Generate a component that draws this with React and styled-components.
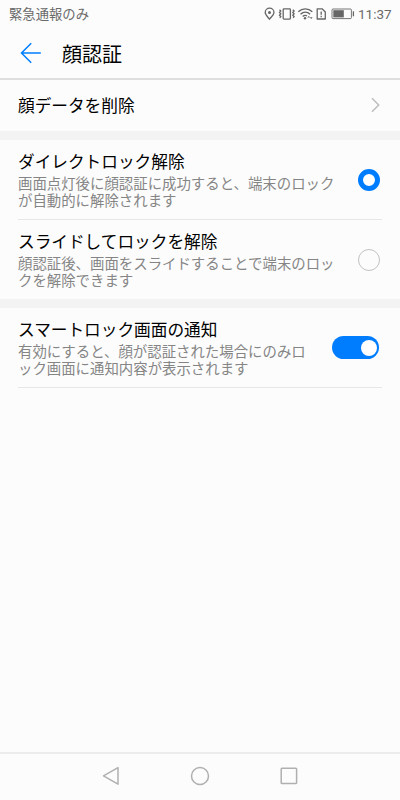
import React from 'react';
import { useState } from "react";
import styled, { createGlobalStyle } from "styled-components";


const GlobalStyle = createGlobalStyle`
    body {
        margin: 0;
        background-color: #fcfcfc;
    }
    * {
        box-sizing: border-box;
    }
`;

const Screen = styled.div`
    display: flex;
    flex-direction: column;
    width: 400px;
    height: 800px;
    background-color: #fcfcfc;
    color: #000;
    font-family: "Noto Sans CJK JP", sans-serif;
    overflow: hidden;
`;

const StatusBar = styled.div`
    display: flex;
    align-items: center;
    justify-content: space-between;
    height: 28px;
    padding: 0 9px;
    color: #6a6a6a;
`;

const Carrier = styled.span`
    padding-bottom: 1px;
    font-size: 13.33px;
    line-height: 20px;
`;

const StatusIcons = styled.div`
    display: flex;
    align-items: center;
`;

const Clock = styled.span`
    width: 33px;
    margin-left: 3px;
    font-family: Roboto, sans-serif;
    font-size: 13.5px;
    line-height: 20px;
    white-space: nowrap;
`;

const Header = styled.header`
    display: flex;
    align-items: center;
    height: 52px;
    padding: 0 20px;
    border-bottom: 2px solid #dedede;
`;

const BackButton = styled.button`
    display: flex;
    width: 42px;
    padding: 0;
    border: none;
    background: none;
`;

const Title = styled.h1`
    margin: 0;
    padding-top: 2px;
    font-size: 20px;
    font-weight: 400;
    line-height: 30px;
`;

const Content = styled.main`
    flex: 1;
`;

const Section = styled.section`
    border-bottom: ${(props) => (props.$last ? "none" : "9px solid #f3f3f3")};
`;

const LinkRow = styled.div`
    display: flex;
    align-items: center;
    justify-content: space-between;
    height: 51px;
    padding: 0 20px 1px 18px;
`;

const OptionRow = styled.div`
    display: flex;
    align-items: center;
    justify-content: space-between;
    height: ${(props) => (props.$divider ? 80 : 79)}px;
    margin: 0 18px;
    padding-right: ${(props) => props.$end || 2}px;
    border-bottom: ${(props) => (props.$divider ? "1px solid #e7e7e7" : "none")};
`;

const OptionText = styled.div`
    width: ${(props) => props.$width}px;
    padding-bottom: 2px;
`;

const OptionTitle = styled.div`
    font-size: 16.67px;
    line-height: 24px;
`;

const Description = styled.p`
    margin: 1px 0 0;
    color: #858585;
    font-size: 14.42px;
    line-height: 17px;
    white-space: nowrap;
`;

const Radio = styled.button`
    width: 22px;
    height: 22px;
    padding: 0;
    border: ${(props) => (props.$checked ? "5.5px solid #007dff" : "1px solid #c2c2c2")};
    border-radius: 50%;
    background-color: ${(props) => (props.$checked ? "#fff" : "transparent")};
`;

const Switch = styled.button`
    display: flex;
    align-items: center;
    justify-content: ${(props) => (props.$on ? "flex-end" : "flex-start")};
    width: 47px;
    height: 23px;
    padding: 0 2.5px;
    border: none;
    border-radius: 12px;
    background-color: ${(props) => (props.$on ? "#007dff" : "#c8c8c8")};
`;

const Knob = styled.span`
    width: 16px;
    height: 16px;
    border-radius: 50%;
    background-color: #fff;
`;

const NavBar = styled.nav`
    display: flex;
    align-items: center;
    justify-content: center;
    gap: 65px;
    height: 48px;
    padding-bottom: 2px;
    border-top: 2px solid #ececec;
`;

const options = [
    {
        id: "direct",
        title: "ダイレクトロック解除",
        lines: ["画面点灯後に顔認証に成功すると、端末のロック", "が自動的に解除されます"],
    },
    {
        id: "slide",
        title: "スライドしてロックを解除",
        lines: ["顔認証後、画面をスライドすることで端末のロッ", "クを解除できます"],
    },
];

const StatusGlyphs = () => (
    <svg width="91" height="16" viewBox="264 6 91 16" fill="none" stroke="#666" strokeWidth="1.3">
        <path d="M269.5 19.2C267.6 16.8 265.2 14.8 265.2 12.6a4.4 4.4 0 0 1 8.8 0C274 14.8 271.4 16.8 269.5 19.2Z" />
        <circle cx="269.5" cy="12.6" r="1.5" fill="#666" stroke="none" />
        <rect x="283.2" y="8.9" width="7.2" height="10.2" rx=".8" />
        <path d="M279.5 9.8l1.3 1.2-1.3 1.4 1.3 1.4-1.3 1.4 1.3 1.4-1 1.2M292.8 9.8l1.3 1.2-1.3 1.4 1.3 1.4-1.3 1.4 1.3 1.4-1 1.2" />
        <path d="M298.3 11.7c4-3.8 10-3.8 14 0M300.5 14.2c2.8-2.6 6.8-2.6 9.6 0M302.7 16.5c1.3-1.2 3-1.3 4.3-.6" strokeWidth="1.4" />
        <circle cx="305" cy="18.2" r="1.2" fill="#666" stroke="none" />
        <path d="M307.2 17.6l1.6-1.7 1.4 1.7zM309.8 17.2l1.4 1.8 1.5-1.8z" fill="#666" stroke="none" />
        <path d="M317.2 8.8h4.9l3.2 3.2v7H317.2z" strokeLinejoin="round" />
        <path d="M321.2 11.4v3.3M321.2 15.8v1.5" />
        <rect x="332" y="9" width="19.4" height="9.6" rx="1" strokeWidth=".9" />
        <rect x="333.3" y="10.2" width="10.5" height="7.2" fill="#666" stroke="none" />
        <path d="M353.4 11.3v5" strokeWidth="1.3" />
    </svg>
);

const App = () => {
    const [selected, setSelected] = useState("direct");
    const [smartLock, setSmartLock] = useState(true);

    return (
        <>
            <GlobalStyle />
            <Screen>
                <StatusBar>
                    <Carrier>緊急通報のみ</Carrier>
                    <StatusIcons>
                        <StatusGlyphs />
                        <Clock>11:37</Clock>
                    </StatusIcons>
                </StatusBar>
                <Header>
                    <BackButton aria-label="戻る">
                        <svg width="22" height="22" viewBox="0 0 22 22" fill="none" stroke="#007dff" strokeWidth="1.5">
                            <path d="M20.8 11H1.6M11.2 1.3L1.5 11l9.7 9.7" />
                        </svg>
                    </BackButton>
                    <Title>顔認証</Title>
                </Header>
                <Content>
                    <Section>
                        <LinkRow>
                            <OptionTitle>顔データを削除</OptionTitle>
                            <svg width="9" height="16" viewBox="0 0 9 16" fill="none" stroke="#bdbdbd" strokeWidth="1.5">
                                <path d="M1 1.3L7.7 8 1 14.7" />
                            </svg>
                        </LinkRow>
                    </Section>
                    <Section>
                        {options.map((option, i) => (
                            <OptionRow key={option.id} $divider={i === 0}>
                                <OptionText $width={320}>
                                    <OptionTitle>{option.title}</OptionTitle>
                                    <Description>
                                        {option.lines[0]}<br />{option.lines[1]}
                                    </Description>
                                </OptionText>
                                <Radio
                                    aria-label={option.title}
                                    $checked={selected === option.id}
                                    onClick={() => setSelected(option.id)}
                                />
                            </OptionRow>
                        ))}
                    </Section>
                    <Section $last>
                        <OptionRow $divider $end={3}>
                            <OptionText $width={292}>
                                <OptionTitle>スマートロック画面の通知</OptionTitle>
                                <Description>
                                    有効にすると、顔が認証された場合にのみロ<br />ック画面に通知内容が表示されます
                                </Description>
                            </OptionText>
                            <Switch aria-label="スマートロック画面の通知" $on={smartLock} onClick={() => setSmartLock(!smartLock)}>
                                <Knob />
                            </Switch>
                        </OptionRow>
                    </Section>
                </Content>
                <NavBar>
                    <svg width="24" height="24" viewBox="0 0 24 24" fill="none" stroke="#b0b0b0" strokeWidth="1.5" strokeLinejoin="round">
                        <path d="M19 3.6v16.6L4.5 11.9z" />
                    </svg>
                    <svg width="24" height="24" viewBox="0 0 24 24" fill="none" stroke="#b0b0b0" strokeWidth="1.5">
                        <circle cx="12" cy="12" r="8.5" />
                    </svg>
                    <svg width="24" height="24" viewBox="0 0 24 24" fill="none" stroke="#b0b0b0" strokeWidth="1.5">
                        <rect x="4.2" y="4.2" width="15.4" height="15.4" rx=".8" />
                    </svg>
                </NavBar>
            </Screen>
        </>
    );
};

export default App;
